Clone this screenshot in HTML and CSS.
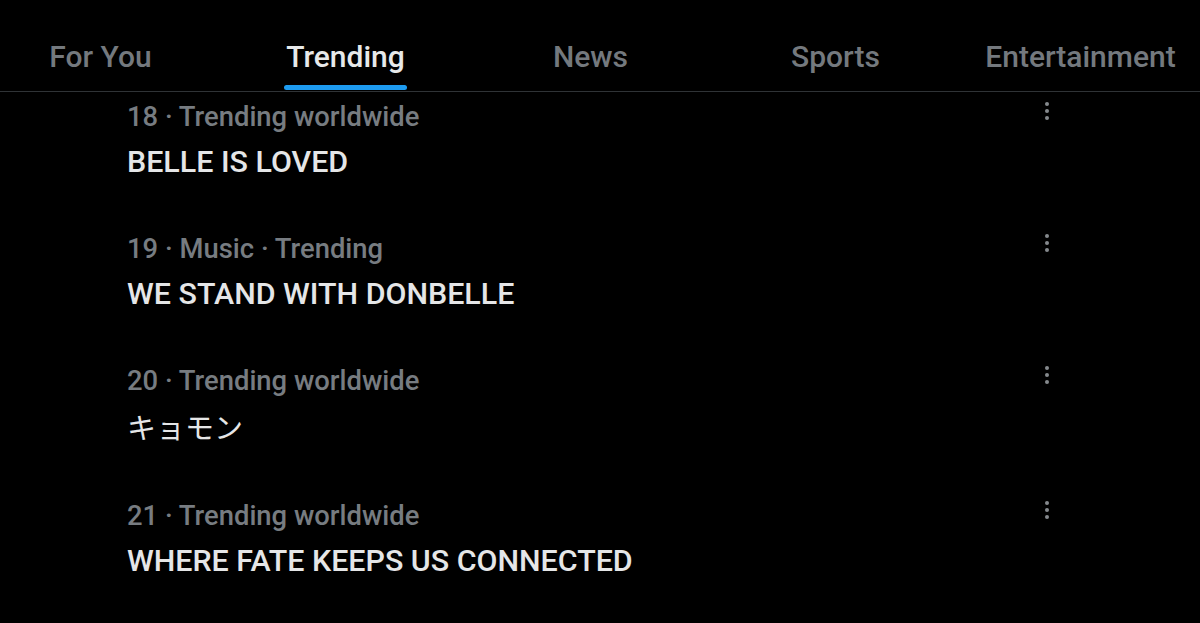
FILE: index.html
```html
<!DOCTYPE html>
<html>
<head>
<meta charset="utf-8">
<link rel="stylesheet" href="styles.css">
</head>
<body>
<div class="tabs">
  <div class="tab">For You</div>
  <div class="tab active"><span class="label">Trending</span></div>
  <div class="tab">News</div>
  <div class="tab">Sports</div>
  <div class="tab">Entertainment</div>
</div>
<div class="list">
  <div class="item">
    <div class="text">
      <div class="meta">18 · Trending worldwide</div>
      <div class="title">BELLE IS LOVED</div>
    </div>
    <div class="more"><i></i><i></i><i></i></div>
  </div>
  <div class="item">
    <div class="text">
      <div class="meta">19 · Music · Trending</div>
      <div class="title">WE STAND WITH DONBELLE</div>
    </div>
    <div class="more"><i></i><i></i><i></i></div>
  </div>
  <div class="item">
    <div class="text">
      <div class="meta">20 · Trending worldwide</div>
      <div class="title jp">キョモン</div>
    </div>
    <div class="more"><i></i><i></i><i></i></div>
  </div>
  <div class="item">
    <div class="text">
      <div class="meta">21 · Trending worldwide</div>
      <div class="title">WHERE FATE KEEPS US CONNECTED</div>
    </div>
    <div class="more"><i></i><i></i><i></i></div>
  </div>
</div>
</body>
</html>
```
FILE: styles.css
```css
html, body {
  margin: 0;
  padding: 0;
  background: #000;
  width: 1200px;
  height: 623px;
  overflow: hidden;
  font-family: Roboto, "Noto Sans CJK JP", sans-serif;
}
.tabs {
  display: flex;
  height: 91px;
  border-bottom: 1px solid #2f3336;
  margin-left: -22px;
}
.tab {
  flex: 0 0 245px;
  display: flex;
  justify-content: center;
  align-items: flex-start;
  box-sizing: border-box;
  padding-top: 39px;
  font-size: 30px;
  line-height: 36px;
  font-weight: 500;
  color: #74797e;
}
.tab.active {
  color: #e7e9ea;
  padding-top: 0;
  align-items: stretch;
}
.tab.active .label {
  display: flex;
  flex-direction: column;
  padding-top: 39px;
}
.tab.active .label::after {
  content: "";
  display: block;
  margin: auto -2px 1px;
  height: 5px;
  border-radius: 3px;
  background: #1d9bf0;
}
.list {
  padding-left: 127px;
}
.item {
  display: flex;
  justify-content: space-between;
  width: 922px;
  padding: 9px 0 46px;
}
.meta {
  font-size: 27.4px;
  font-weight: 500;
  color: #777c81;
  line-height: 32px;
}
.title {
  margin-top: 13px;
  font-size: 30.4px;
  font-weight: 500;
  color: #e5e6e7;
  line-height: 32px;
}
.title.jp {
  font-weight: 400;
  font-size: 29px;
  margin-top: 16px;
}
.more {
  display: flex;
  flex-direction: column;
  gap: 3px;
  padding-top: 1px;
}
.more i {
  display: block;
  width: 4px;
  height: 4px;
  border-radius: 50%;
  background: #85898d;
}
```
